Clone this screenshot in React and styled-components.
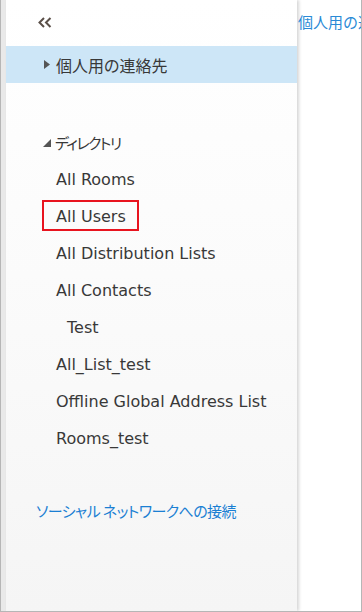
import React from "react";
import styled, { createGlobalStyle } from "styled-components";

const Global = createGlobalStyle`
  html, body { margin: 0; padding: 0; background: #fff; }
  body { font-family: "Noto Sans CJK JP", "DejaVu Sans", sans-serif; }
`;

const Frame = styled.div`
  box-sizing: border-box;
  width: 362px;
  height: 612px;
  border: 1px solid #b6b6b6;
  border-top: none;
  display: flex;
  overflow: hidden;
  background: #fff;
`;

const Strip = styled.div`
  width: 5px;
  flex: none;
  background: #e9e9e9;
`;

const Sidebar = styled.nav`
  width: 291px;
  flex: none;
  position: relative;
  z-index: 1;
  background: linear-gradient(#ffffff 0%, #fbfbfb 45%, #f5f5f5 100%);
  box-shadow: 2px 0 3px rgba(0, 0, 0, 0.16);
  display: flex;
  flex-direction: column;
`;

const Top = styled.div`
  height: 46px;
  display: flex;
  align-items: flex-start;
  padding: 17px 0 0 31px;
  box-sizing: border-box;
`;

const Row = styled.div`
  height: 37px;
  display: flex;
  align-items: center;
  padding-left: ${(p) => p.$indent}px;
  background: ${(p) => (p.$selected ? "#cde6f7" : "transparent")};
  color: #383838;
  font-size: ${(p) => p.$size || 16}px;
  font-family: ${(p) =>
    p.$latin
      ? `"DejaVu Sans", "Noto Sans CJK JP", sans-serif`
      : `"Noto Sans CJK JP", sans-serif`};
  font-feature-settings: "palt";
  white-space: nowrap;
  position: relative;
`;

const Label = styled.span`
  position: relative;
  display: inline-block;
  letter-spacing: ${(p) => p.$ls || 0}px;
  &::before {
    content: "";
    display: ${(p) => (p.$marked ? "block" : "none")};
    position: absolute;
    left: -14px;
    top: -7px;
    width: 97px;
    height: 31px;
    box-sizing: border-box;
    border: 2px solid #e8141f;
  }
`;

const Caret = styled.svg`
  flex: none;
  margin-right: ${(p) => p.$gap}px;
`;

const Spacer = styled.div`
  height: ${(p) => p.$h}px;
  flex: none;
`;

const Link = styled.a`
  display: block;
  padding-left: 30px;
  color: #1b7fd3;
  font-size: 15px;
  letter-spacing: -0.6px;
  font-family: "Noto Sans CJK JP", sans-serif;
  font-feature-settings: "palt";
  text-decoration: none;
  white-space: nowrap;
  line-height: 22px;
`;

const Main = styled.main`
  flex: 1;
  min-width: 0;
  position: relative;
  z-index: 2;
  margin-left: 1px;
  padding-top: 11px;
  overflow: hidden;
`;

const Title = styled.div`
  color: #2a8ad6;
  font-size: 15px;
  font-family: "Noto Sans CJK JP", sans-serif;
  white-space: nowrap;
  line-height: 22px;
`;

const items = [
  { t: "All Rooms" },
  { t: "All Users", marked: true },
  { t: "All Distribution Lists" },
  { t: "All Contacts" },
  { t: "Test", indent: 61 },
  { t: "All_List_test" },
  { t: "Offline Global Address List" },
  { t: "Rooms_test" },
];

export default function App() {
  return (
    <>
      <Global />
      <Frame>
        <Strip />
        <Sidebar>
          <Top>
            <svg width="15" height="11" viewBox="0 0 15 11">
              <path d="M7 1 L2.5 5.5 L7 10" fill="none" stroke="#5a4f48" strokeWidth="2" />
              <path d="M13.5 1 L9 5.5 L13.5 10" fill="none" stroke="#5a4f48" strokeWidth="2" />
            </svg>
          </Top>
          <Row $selected $indent={38}>
            <Caret $gap={6} width="6" height="9" viewBox="0 0 6 9">
              <path d="M0 0 L6 4.5 L0 9 Z" fill="#555" />
            </Caret>
            <Label>個人用の連絡先</Label>
          </Row>
          <Spacer $h={41} />
          <Row $indent={37} $size={15}>
            <Caret $gap={4} width="8" height="8" viewBox="0 0 8 8">
              <path d="M8 0 L8 8 L0 8 Z" fill="#555" />
            </Caret>
            <Label $ls={-1.6}>ディレクトリ</Label>
          </Row>
          {items.map((it) => (
            <Row key={it.t} $latin $indent={it.indent || 50} $size={16}>
              <Label $marked={it.marked}>{it.t}</Label>
            </Row>
          ))}
          <Spacer $h={43} />
          <Link href="#">ソーシャル ネットワークへの接続</Link>
        </Sidebar>
        <Main>
          <Title>個人用の連絡先</Title>
        </Main>
      </Frame>
    </>
  );
}
